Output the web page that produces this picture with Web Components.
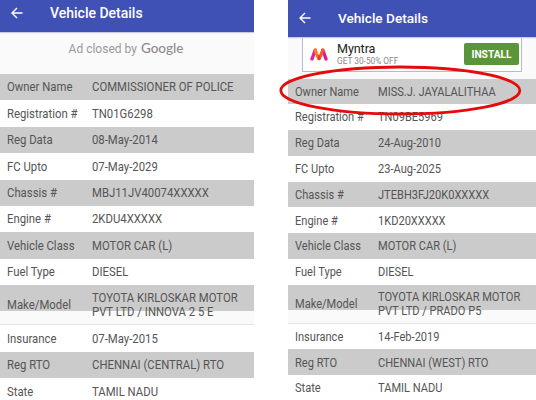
<!DOCTYPE html>
<html lang="en">
<head>
<meta charset="utf-8">
<title>Vehicle Details</title>
<style>
  body {
    margin: 0;
    width: 536px;
    height: 400px;
    overflow: hidden;
    background: #fff;
    font-family: Roboto, "Liberation Sans", sans-serif;
  }
  main {
    position: relative;
    display: flex;
    gap: 34px;
    height: 400px;
  }
  .left {
    --bar: 31.5px;
    --ad: 42.5px;
    --row: 26.4px;
    --model: 40.2px;
    --label: 85px;
    --font: 12.2px;
    --squeeze: 0.93;
    --shade: 26px;
    --title: 14px;
    --title-y: 6.5px;
    flex: 0 0 254px;
  }
  .right {
    --bar: 37px;
    --ad: 41.5px;
    --row: 25.8px;
    --model: 38.8px;
    --label: 83px;
    --font: 12px;
    --squeeze: 0.922;
    --shade: 25px;
    --title: 13.6px;
    --title-y: 1px;
    flex: 0 0 248px;
  }
</style>
</head>
<body>
<main>
  <phone-screen class="left">
    <app-bar>Vehicle Details</app-bar>
    <closed-ad slot="ad"></closed-ad>
    <info-row label="Owner Name">COMMISSIONER OF POLICE</info-row>
    <info-row label="Registration #">TN01G6298</info-row>
    <info-row label="Reg Data">08-May-2014</info-row>
    <info-row label="FC Upto">07-May-2029</info-row>
    <info-row label="Chassis #">MBJ11JV40074XXXXX</info-row>
    <info-row label="Engine #">2KDU4XXXXX</info-row>
    <info-row label="Vehicle Class">MOTOR CAR (L)</info-row>
    <info-row label="Fuel Type">DIESEL</info-row>
    <info-row label="Make/Model" tall>TOYOTA KIRLOSKAR MOTOR<br>PVT LTD / INNOVA 2 5 E</info-row>
    <info-row label="Insurance">07-May-2015</info-row>
    <info-row label="Reg RTO">CHENNAI (CENTRAL) RTO</info-row>
    <info-row label="State">TAMIL NADU</info-row>
  </phone-screen>
  <phone-screen class="right">
    <app-bar>Vehicle Details</app-bar>
    <install-ad slot="ad" action="INSTALL">
      Myntra
      <span slot="offer">GET 30-50% OFF</span>
    </install-ad>
    <info-row label="Owner Name">MISS.J. JAYALALITHAA</info-row>
    <info-row label="Registration #">TN09BE5969</info-row>
    <info-row label="Reg Data">24-Aug-2010</info-row>
    <info-row label="FC Upto">23-Aug-2025</info-row>
    <info-row label="Chassis #">JTEBH3FJ20K0XXXXX</info-row>
    <info-row label="Engine #">1KD20XXXXX</info-row>
    <info-row label="Vehicle Class">MOTOR CAR (L)</info-row>
    <info-row label="Fuel Type">DIESEL</info-row>
    <info-row label="Make/Model" tall>TOYOTA KIRLOSKAR MOTOR<br>PVT LTD / PRADO P5</info-row>
    <info-row label="Insurance">14-Feb-2019</info-row>
    <info-row label="Reg RTO">CHENNAI (WEST) RTO</info-row>
    <info-row label="State">TAMIL NADU</info-row>
  </phone-screen>
  <red-ring></red-ring>
</main>

<script>
  // Shared base: puts the template of each element in its shadow root
  class BaseElement extends HTMLElement {
    constructor() {
      super();
      this.attachShadow({ mode: "open" });
    }
    connectedCallback() {
      const template = document.createElement("template");
      template.innerHTML = `${this.getStyles()}${this.getTemplate()}`;
      this.shadowRoot.replaceChildren(template.content.cloneNode(true));
    }
  }

  class PhoneScreen extends BaseElement {
    getTemplate() {
      return `
        <slot name="bar"></slot>
        <div class="ad"><slot name="ad"></slot></div>
        <div class="rows"><slot></slot></div>
      `;
    }
    connectedCallback() {
      // the bar goes above the ad
      const bar = this.querySelector("app-bar");
      if (bar) bar.slot = "bar";
      super.connectedCallback();
    }
    getStyles() {
      return `
        <style>
          :host {
            display: block;
            height: 400px;
            overflow: hidden;
            background: #fafafa;
          }
          .ad { height: var(--ad); }
          .rows { display: flex; flex-direction: column; }
          ::slotted(info-row:nth-of-type(odd)) { --fill: #cbcbcb; }
          ::slotted(info-row:nth-of-type(even)) { --fill: #fff; }
        </style>
      `;
    }
  }

  class AppBar extends BaseElement {
    getTemplate() {
      return `
        <svg width="12" height="12" viewBox="0 0 12 12">
          <path d="M11.5 6H1.2M6 1L1 6l5 5" fill="none" stroke="#fff" stroke-width="1.4"/>
        </svg>
        <span><slot></slot></span>
      `;
    }
    getStyles() {
      return `
        <style>
          :host {
            display: flex;
            align-items: center;
            box-sizing: border-box;
            height: var(--bar);
            padding: 0 0 var(--title-y) 11px;
            background: #3f51b5;
            color: #fff;
            box-shadow: 0 1px 1px #c9cbd8;
            position: relative;
          }
          span {
            margin-left: 27px;
            font-size: var(--title);
            font-weight: 500;
            white-space: nowrap;
          }
        </style>
      `;
    }
  }

  class ClosedAd extends BaseElement {
    getTemplate() {
      return `<span>Ad closed by</span><b>Google</b>`;
    }
    getStyles() {
      return `
        <style>
          :host {
            display: flex;
            justify-content: center;
            align-items: baseline;
            gap: 4px;
            padding-top: 8px;
            padding-right: 2px;
            color: #999;
            font-size: 12px;
          }
          b {
            color: #8c8c8c;
            font: 500 13.5px Lato, sans-serif;
          }
        </style>
      `;
    }
  }

  class InstallAd extends BaseElement {
    getTemplate() {
      return `
        <div class="card">
          <svg width="18" height="13" viewBox="0 0 18 13">
            <path d="M2 11L5.2 2.2" stroke="#e5249c" stroke-width="3.4" stroke-linecap="round"/>
            <path d="M16 11L12.8 2.2" stroke="#e8198b" stroke-width="3.4" stroke-linecap="round"/>
            <path d="M5.2 2.2L8.6 10.6" stroke="#f77f20" stroke-width="3.2" stroke-linecap="round"/>
            <path d="M12.8 2.2L9.4 10.6" stroke="#f45b2c" stroke-width="3.2" stroke-linecap="round"/>
            <path d="M8.5 8L9 11" stroke="#e23b25" stroke-width="2" stroke-linecap="round"/>
          </svg>
          <div class="text">
            <div class="name"><slot></slot></div>
            <div class="offer"><slot name="offer"></slot></div>
          </div>
          <div class="button">${this.getAttribute("action")}</div>
        </div>
      `;
    }
    getStyles() {
      return `
        <style>
          :host { display: block; padding: 0 14px; }
          .card {
            display: flex;
            align-items: center;
            box-sizing: border-box;
            height: 34.5px;
            padding: 0 2px 0 7px;
            border: 1px solid #b9bbc4;
            background: #fff;
          }
          .text { flex: 1; margin-left: 9px; white-space: nowrap; }
          .name { color: #222; font-size: 12.6px; line-height: 14px; letter-spacing: -0.1px; }
          .offer { color: #888; font-size: 8.3px; line-height: 10px; }
          .button {
            width: 55px;
            height: 22px;
            border-radius: 2px;
            background: #5a9639;
            color: #fff;
            font-size: 10.2px;
            font-weight: 700;
            line-height: 23px;
            text-align: center;
          }
        </style>
      `;
    }
  }

  class InfoRow extends BaseElement {
    getTemplate() {
      return `
        <div class="label">${this.getAttribute("label")}</div>
        <div class="value"><slot></slot></div>
      `;
    }
    getStyles() {
      return `
        <style>
          :host {
            display: flex;
            align-items: center;
            box-sizing: border-box;
            height: var(--row);
            padding: 0.6px 0 0 7px;
            background: var(--fill);
            color: #555;
            font-size: var(--font);
            line-height: 14px;
            white-space: nowrap;
          }
          /* two lines of text, but the shade stays one row high */
          :host([tall]) {
            height: var(--model);
            background: linear-gradient(#cbcbcb var(--shade), #fafafa var(--shade));
            border-bottom: 1px solid #e4e4e4;
          }
          .label { flex: 0 0 var(--label); }
          .label, .value {
            transform: scaleX(var(--squeeze));
            transform-origin: left;
          }
        </style>
      `;
    }
  }

  // Hand drawn mark over the owner's name
  class RedRing extends BaseElement {
    getTemplate() {
      return `
        <svg width="246" height="54" viewBox="0 0 246 54">
          <ellipse cx="121.3" cy="25.5" rx="119.5" ry="23.5" fill="none" stroke="#e30b0b" stroke-width="2.8"/>
        </svg>
      `;
    }
    getStyles() {
      return `
        <style>
          :host { position: absolute; left: 279px; top: 65px; }
          svg { display: block; }
        </style>
      `;
    }
  }

  customElements.define("phone-screen", PhoneScreen);
  customElements.define("app-bar", AppBar);
  customElements.define("closed-ad", ClosedAd);
  customElements.define("install-ad", InstallAd);
  customElements.define("info-row", InfoRow);
  customElements.define("red-ring", RedRing);
</script>
</body>
</html>
